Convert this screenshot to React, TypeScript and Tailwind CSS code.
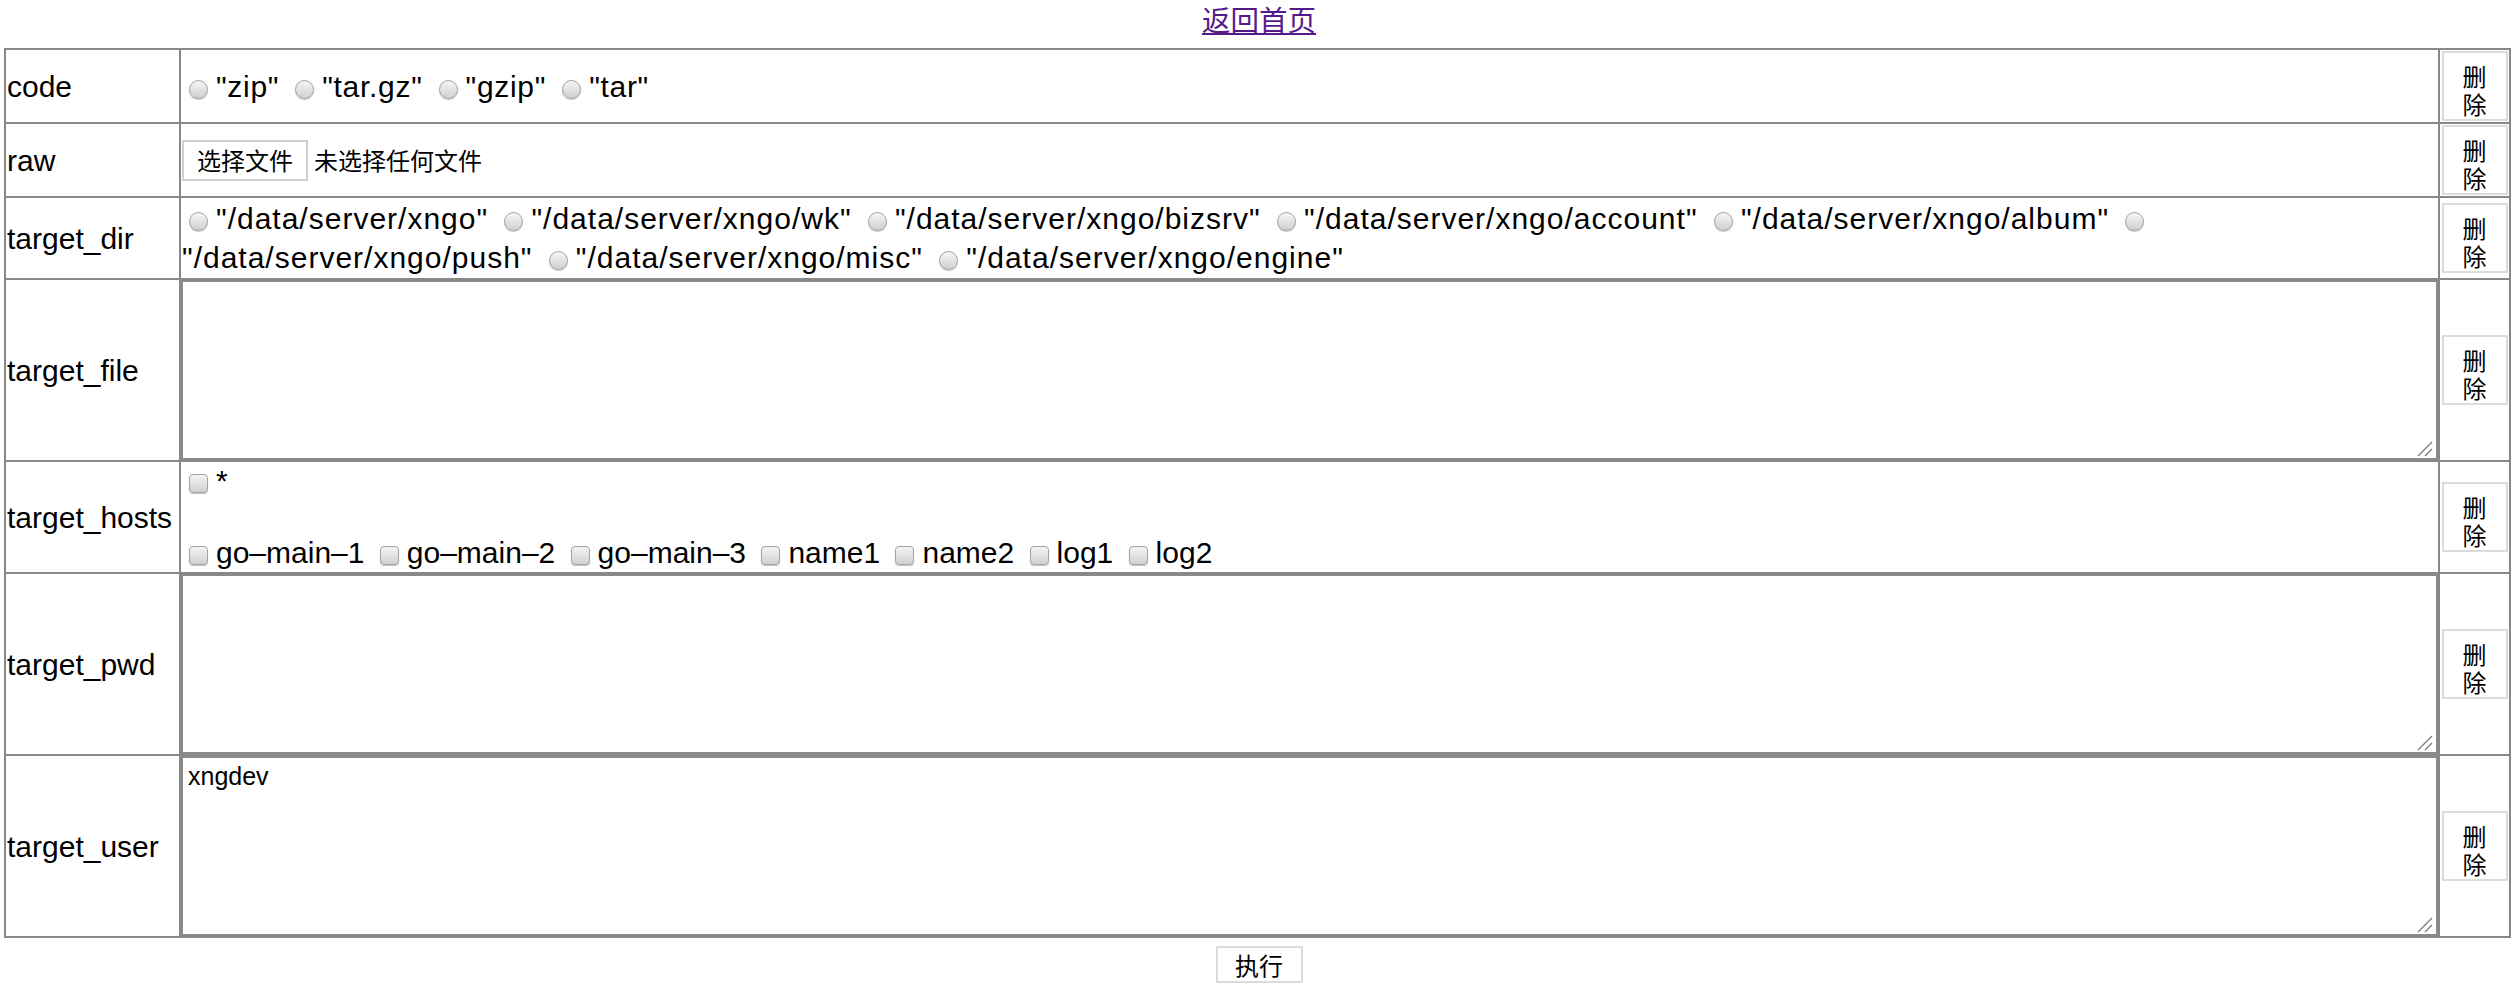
import React from "react";

const Radio = () => (
  <span className="inline-block w-[19px] h-[19px] rounded-full border border-[#a4a4a4] bg-linear-to-b from-[#f5f5f5] to-[#d0d0d0] shadow-[0_1px_1px_rgba(0,0,0,0.25)] align-[-2px] ml-[7px] mr-[8px]" />
);

const Check = () => (
  <span className="inline-block w-[19px] h-[19px] rounded-[4px] border border-[#a4a4a4] bg-linear-to-b from-[#f5f5f5] to-[#d0d0d0] shadow-[0_1px_1px_rgba(0,0,0,0.25)] align-[-2px] ml-[7px] mr-[8px]" />
);

const Del = () => (
  <button
    type="button"
    className="block mx-auto w-[66px] h-[70px] border-2 border-[#dcdcdc] bg-white px-[9px] pt-[8px] text-[24px] leading-[28px] text-center text-black tracking-normal font-['Noto_Sans_CJK_SC',sans-serif]"
  >
    删除
  </button>
);

const TA = ({ value }: { value?: string }) => (
  <div className="relative">
    <textarea
      defaultValue={value}
      className="block w-full h-[180px] resize-none border-2 border-[#8a8a8a] bg-white px-[5px] py-[4px] text-[25px] leading-[29px] text-black font-['Liberation_Sans',sans-serif] outline-none"
    />
    <svg
      className="absolute right-[5px] bottom-[3px] w-[16px] h-[16px] pointer-events-none"
      viewBox="0 0 16 16"
    >
      <path d="M15 1 L1 15 M15 8 L8 15" stroke="#7a7a7a" strokeWidth="1.3" fill="none" />
    </svg>
  </div>
);

const labelCls = "border-2 border-[#888] pl-[1px] align-middle text-left font-normal";
const midCls = "border-2 border-[#888] p-[1px] align-middle";
const delCls = "border-2 border-[#888] p-[1px] align-middle";

export default function App() {
  const codes = ['"zip"', '"tar.gz"', '"gzip"', '"tar"'];
  const dirs1 = [
    '"/data/server/xngo"',
    '"/data/server/xngo/wk"',
    '"/data/server/xngo/bizsrv"',
    '"/data/server/xngo/account"',
    '"/data/server/xngo/album"',
  ];
  const hosts = ["go–main–1", "go–main–2", "go–main–3", "name1", "name2", "log1", "log2"];

  return (
    <div className="min-h-screen w-full bg-white text-black text-[30px] font-['Liberation_Sans','Noto_Sans_CJK_SC',sans-serif]">
      <div className="h-[48px] text-center leading-[38px]">
        <a
          href="#"
          className="text-[28.5px] text-[#551a8b] underline font-['Noto_Sans_CJK_SC',sans-serif]"
        >
          返回首页
        </a>
      </div>

      <div className="pl-[4px] pr-[7px]">
        <table className="w-full table-fixed border-collapse border-2 border-[#888]">
          <colgroup>
            <col className="w-[175px]" />
            <col />
            <col className="w-[71px]" />
          </colgroup>
          <tbody>
            <tr>
              <td className={labelCls}>code</td>
              <td className={`${midCls} leading-[39px] tracking-[0.7px]`}>
                {codes.map((c, i) => (
                  <React.Fragment key={c}>
                    {i > 0 ? " " : null}
                    <Radio />
                    {c}
                  </React.Fragment>
                ))}
              </td>
              <td className={delCls}>
                <Del />
              </td>
            </tr>

            <tr>
              <td className={labelCls}>raw</td>
              <td className={midCls}>
                <div className="flex items-center">
                  <span className="inline-flex items-center h-[41px] border-2 border-[#cfcfcf] bg-white pl-[13px] pr-[13px] text-[24px] font-['Noto_Sans_CJK_SC',sans-serif]">
                    选择文件
                  </span>
                  <span className="ml-[6px] text-[24px] font-['Noto_Sans_CJK_SC',sans-serif]">
                    未选择任何文件
                  </span>
                </div>
              </td>
              <td className={delCls}>
                <Del />
              </td>
            </tr>

            <tr>
              <td className={labelCls}>target_dir</td>
              <td className={`${midCls} leading-[39px] tracking-[1px]`}>
                {dirs1.map((d, i) => (
                  <React.Fragment key={d}>
                    {i > 0 ? " " : null}
                    <Radio />
                    {d}
                  </React.Fragment>
                ))}{" "}
                <Radio />
                <br />
                {'"/data/server/xngo/push"'} <Radio />
                {'"/data/server/xngo/misc"'} <Radio />
                {'"/data/server/xngo/engine"'}
              </td>
              <td className={delCls}>
                <Del />
              </td>
            </tr>

            <tr>
              <td className={labelCls}>target_file</td>
              <td className="border-2 border-[#888] p-0 align-middle">
                <TA />
              </td>
              <td className={delCls}>
                <Del />
              </td>
            </tr>

            <tr>
              <td className={labelCls}>target_hosts</td>
              <td className={`${midCls} leading-[36px]`}>
                <div>
                  <Check />*
                </div>
                <div>&nbsp;</div>
                <div>
                  {hosts.map((h, i) => (
                    <React.Fragment key={h}>
                      {i > 0 ? " " : null}
                      <Check />
                      {h}
                    </React.Fragment>
                  ))}
                </div>
              </td>
              <td className={delCls}>
                <Del />
              </td>
            </tr>

            <tr>
              <td className={labelCls}>target_pwd</td>
              <td className="border-2 border-[#888] p-0 align-middle">
                <TA />
              </td>
              <td className={delCls}>
                <Del />
              </td>
            </tr>

            <tr>
              <td className={labelCls}>target_user</td>
              <td className="border-2 border-[#888] p-0 align-middle">
                <TA value="xngdev" />
              </td>
              <td className={delCls}>
                <Del />
              </td>
            </tr>
          </tbody>
        </table>
      </div>

      <div className="flex justify-center pt-[8px]">
        <button
          type="button"
          className="w-[87px] h-[37px] border-2 border-[#dcdcdc] bg-white text-[24px] leading-[30px] text-black font-['Noto_Sans_CJK_SC',sans-serif]"
        >
          执行
        </button>
      </div>
    </div>
  );
}
